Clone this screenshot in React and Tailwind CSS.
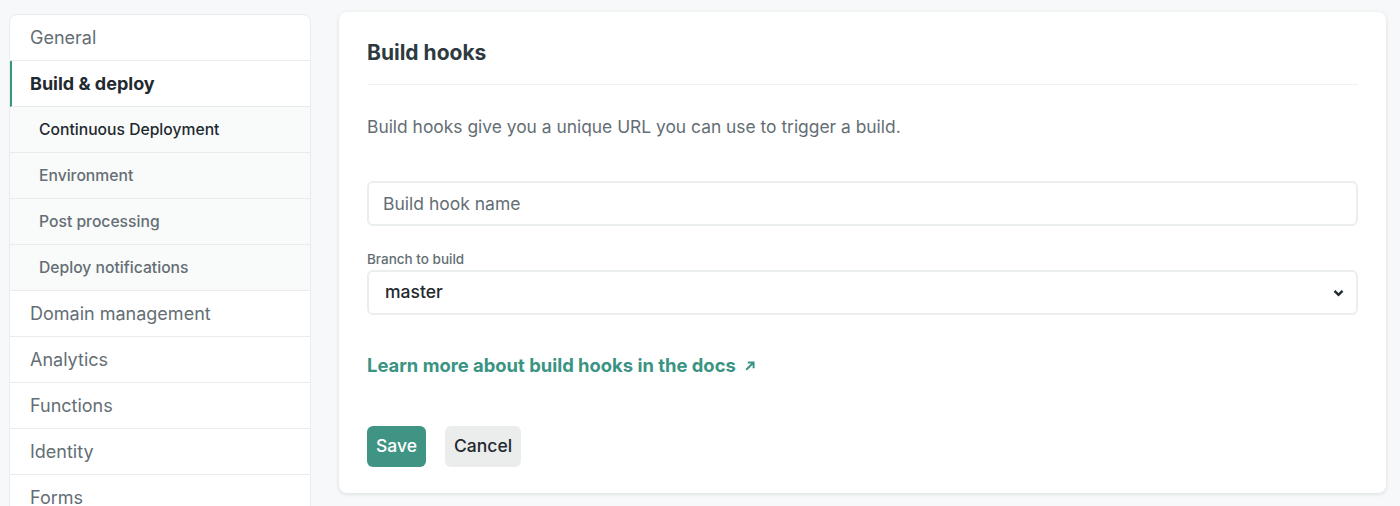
import React from 'react';

const navTop = ['General'];
const subItems = ['Continuous Deployment', 'Environment', 'Post processing', 'Deploy notifications'];
const navRest = ['Domain management', 'Analytics', 'Functions', 'Identity', 'Forms'];

const Sidebar = () => (
  <aside className="w-[302px] shrink-0 mt-[14px] bg-white rounded-t-lg border border-[#e9ecee] overflow-hidden self-start">
    {navTop.map((item) => (
      <div key={item} className="h-[46px] flex items-center pl-[20px] text-[18px] text-[#646e74] border-b border-[#e9ecee]">
        {item}
      </div>
    ))}
    <div className="h-[46px] flex items-center pl-[18px] text-[18px] font-bold text-[#1f2a30] border-b border-[#e9ecee] border-l-2 border-l-[#3a9483]">
      Build &amp; deploy
    </div>
    {subItems.map((item, i) => (
      <div
        key={item}
        className={`h-[46px] flex items-center pl-[29px] text-[15.7px] bg-[#f9fafa] border-b border-[#e9ecee] font-medium ${
          i === 0 ? 'text-[#1f2a30]' : 'text-[#646e74]'
        }`}
      >
        {item}
      </div>
    ))}
    {navRest.map((item) => (
      <div key={item} className="h-[46px] flex items-center pl-[20px] text-[18px] text-[#646e74] border-b border-[#e9ecee]">
        {item}
      </div>
    ))}
  </aside>
);

const BuildHooks = () => (
  <section className="flex-1 mt-[12px] h-[481px] bg-white rounded-lg shadow-[0_1px_4px_rgba(14,30,37,0.12)] px-[28px] pt-[28px]">
    <h2 className="text-[21px] font-bold text-[#2e3a40] pb-[18px] border-b border-[#eef1f2] leading-[26px]">Build hooks</h2>
    <p className="mt-[30px] text-[17.4px] text-[#646e74] leading-[24px]">
      Build hooks give you a unique URL you can use to trigger a build.
    </p>
    <div className="mt-[42px]">
      <input
        type="text"
        placeholder="Build hook name"
        className="w-full h-[45px] rounded-md border-2 border-[#ebeeef] px-[14px] text-[17.5px] text-[#2e3a40] placeholder:text-[#646e74] outline-none"
      />
    </div>
    <label className="block mt-[25px] mb-[3px] text-[13.5px] leading-[16px] text-[#646e74] font-medium">Branch to build</label>
    <div className="relative">
      <div className="w-full h-[45px] rounded-md border-2 border-[#ebeeef] pl-[16px] flex items-center text-[17.5px] text-[#1f2a30] font-medium">
        master
      </div>
      <svg className="absolute right-[14px] top-1/2 -translate-y-1/2" width="11" height="8" viewBox="0 0 11 8">
        <path d="M1.5 1.8 L5.5 5.8 L9.5 1.8" fill="none" stroke="#1f2a30" strokeWidth="2.4" />
      </svg>
    </div>
    <a href="#" className="mt-[37px] inline-flex items-center gap-[8px] text-[18.4px] font-bold text-[#3a9483]">
      Learn more about build hooks in the docs
      <svg width="12" height="12" viewBox="0 0 11 11">
        <path d="M2 9 L8.5 2.5 M3.5 2.2 H8.8 V7.5" fill="none" stroke="#3a9483" strokeWidth="1.8" />
      </svg>
    </a>
    <div className="mt-[46px] flex gap-[19px]">
      <button className="h-[41px] px-[9px] rounded-md bg-[#3f9484] text-white text-[17.5px] font-medium">Save</button>
      <button className="h-[41px] px-[9px] rounded-md bg-[#ebecec] text-[#1f2a30] text-[17.5px] font-medium">Cancel</button>
    </div>
  </section>
);

export default function App() {
  return (
    <div className="w-[1400px] h-[506px] overflow-hidden bg-[#f6f8f9] flex gap-[28px] pl-[9px] pr-[14px]" style={{ fontFamily: 'Inter, "Noto Sans", sans-serif' }}>
      <Sidebar />
      <BuildHooks />
    </div>
  );
}
